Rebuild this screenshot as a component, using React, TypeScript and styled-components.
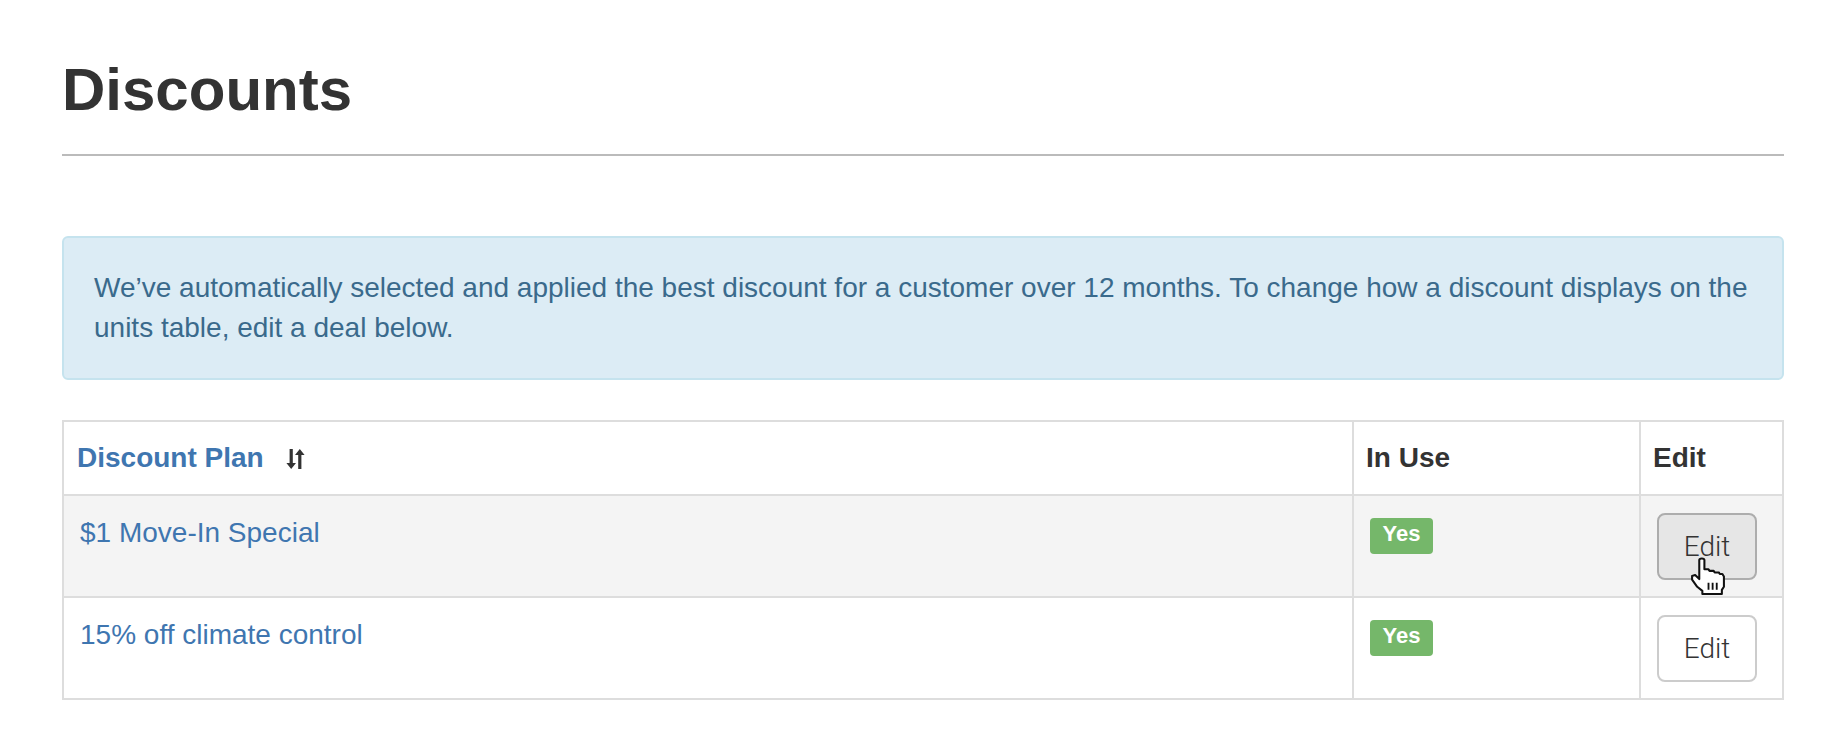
import * as React from "react"
import styled, { createGlobalStyle } from "styled-components"

const discounts = [
  { id: 1, name: "$1 Move-In Special", inUse: true, hovered: true },
  { id: 2, name: "15% off climate control", inUse: true, hovered: false },
]

const SortIcon = () => (
  <SortSvg viewBox="0 0 19 20" aria-hidden="true">
    <path d="M3.600 0h3.200v14h3.200L5.200 20 .4 14h3.200z" fill="#333" />
    <path d="M12.200 20h3.200V6h3.200L13.800 0 9 6h3.200z" fill="#333" />
  </SortSvg>
)

const HandCursor = () => (
  <CursorSvg viewBox="0 0 33 37" aria-hidden="true">
    <path
      d="M8 3c0-2 5-2 5 0v9h4l1 1.500h4l1 1.500h4l1 1.500h2.500L32 19v10l-2 3v4H11v-3L6 29 1 22v-3.500l3-1 4 4z"
      fill="#fff"
      stroke="#111"
      strokeWidth="2"
      strokeLinejoin="round"
    />
    <path d="M17 25v7M21 25v7M25 25v7" stroke="#111" strokeWidth="1.800" fill="none" />
  </CursorSvg>
)

export default function App() {
  return (
    <>
      <GlobalStyle />
      <Page>
        <Header>
          <Title>Discounts</Title>
        </Header>

        <Alert>
          We’ve automatically selected and applied the best discount for a customer over 12 months. To change how a
          discount displays on the units table, edit a deal below.
        </Alert>

        <Table>
          <thead>
            <tr>
              <PlanHead>
                <SortLink>Discount Plan</SortLink>
                <SortIcon />
              </PlanHead>
              <UseHead>In Use</UseHead>
              <EditHead>Edit</EditHead>
            </tr>
          </thead>
          <tbody>
            {discounts.map((d) => (
              <Row key={d.id} $hovered={d.hovered}>
                <Cell>
                  <PlanLink>{d.name}</PlanLink>
                </Cell>
                <Cell>{d.inUse && <Badge>Yes</Badge>}</Cell>
                <ButtonCell>
                  <EditButton $active={d.hovered}>Edit</EditButton>
                  {d.hovered && <HandCursor />}
                </ButtonCell>
              </Row>
            ))}
          </tbody>
        </Table>
      </Page>
    </>
  )
}

/* ---------------- styles ---------------- */

const GlobalStyle = createGlobalStyle`
  * {
    box-sizing: border-box;
  }
  html, body {
    margin: 0;
    background: #fff;
  }
  body {
    font-family: "Liberation Sans", Arial, sans-serif;
    font-size: 28px;
    line-height: 40px;
    color: #333;
  }
`

const Page = styled.div`
  padding: 0 62px;
`

const Header = styled.header`
  padding: 57px 0 31px;
  border-bottom: 2px solid #bbb;
`

const Title = styled.h1`
  margin: 0;
  font-size: 60px;
  line-height: 66px;
  font-weight: 700;
  color: #333;
`

const Alert = styled.div`
  margin-top: 80px;
  padding: 30px 24px 30px 30px;
  height: 144px;
  background: #dcecf5;
  border: 2px solid #c5e3ee;
  border-radius: 6px;
  color: #3a6a8c;
`

const Table = styled.table`
  margin-top: 40px;
  width: 100%;
  table-layout: fixed;
  border-collapse: collapse;
`

const HeadCell = styled.th`
  padding: 16px 12px;
  border: 2px solid #ddd;
  text-align: left;
  font-weight: 700;
  color: #333;
`

const PlanHead = styled(HeadCell)`
  width: auto;
  padding-left: 13px;
`

const UseHead = styled(HeadCell)`
  width: 287px;
`

const EditHead = styled(HeadCell)`
  width: 143px;
`

const SortLink = styled.a`
  color: #3f76b0;
`

const SortSvg = styled.svg`
  width: 19px;
  height: 20px;
  margin-left: 22px;
  vertical-align: -2px;
`

const Row = styled.tr<{ $hovered?: boolean }>`
  background: ${({ $hovered }) => ($hovered ? "#f4f4f4" : "#fff")};
`

const Cell = styled.td`
  padding: 17px 16px 16px;
  border: 2px solid #ddd;
  vertical-align: top;
`

const ButtonCell = styled(Cell)`
  position: relative;
`

const PlanLink = styled.a`
  color: #3f76b0;
`

const Badge = styled.span`
  display: inline-block;
  margin-top: 5px;
  padding: 0 12.500px;
  height: 36px;
  line-height: 31px;
  vertical-align: top;
  background: #75b76a;
  border-radius: 4px;
  color: #fff;
  font-size: 22px;
  font-weight: 700;
`

const EditButton = styled.button<{ $active?: boolean }>`
  display: block;
  width: 100px;
  height: 67px;
  padding: 0;
  background: ${({ $active }) => ($active ? "#e6e6e6" : "#fff")};
  border: 2px solid ${({ $active }) => ($active ? "#adadad" : "#ccc")};
  border-radius: 8px;
  color: #333;
  font-family: Roboto, "Liberation Sans", sans-serif;
  font-size: 28px;
  font-weight: 300;
`

const CursorSvg = styled.svg`
  position: absolute;
  top: 61px;
  left: 50px;
  width: 34px;
  height: 38px;
`
